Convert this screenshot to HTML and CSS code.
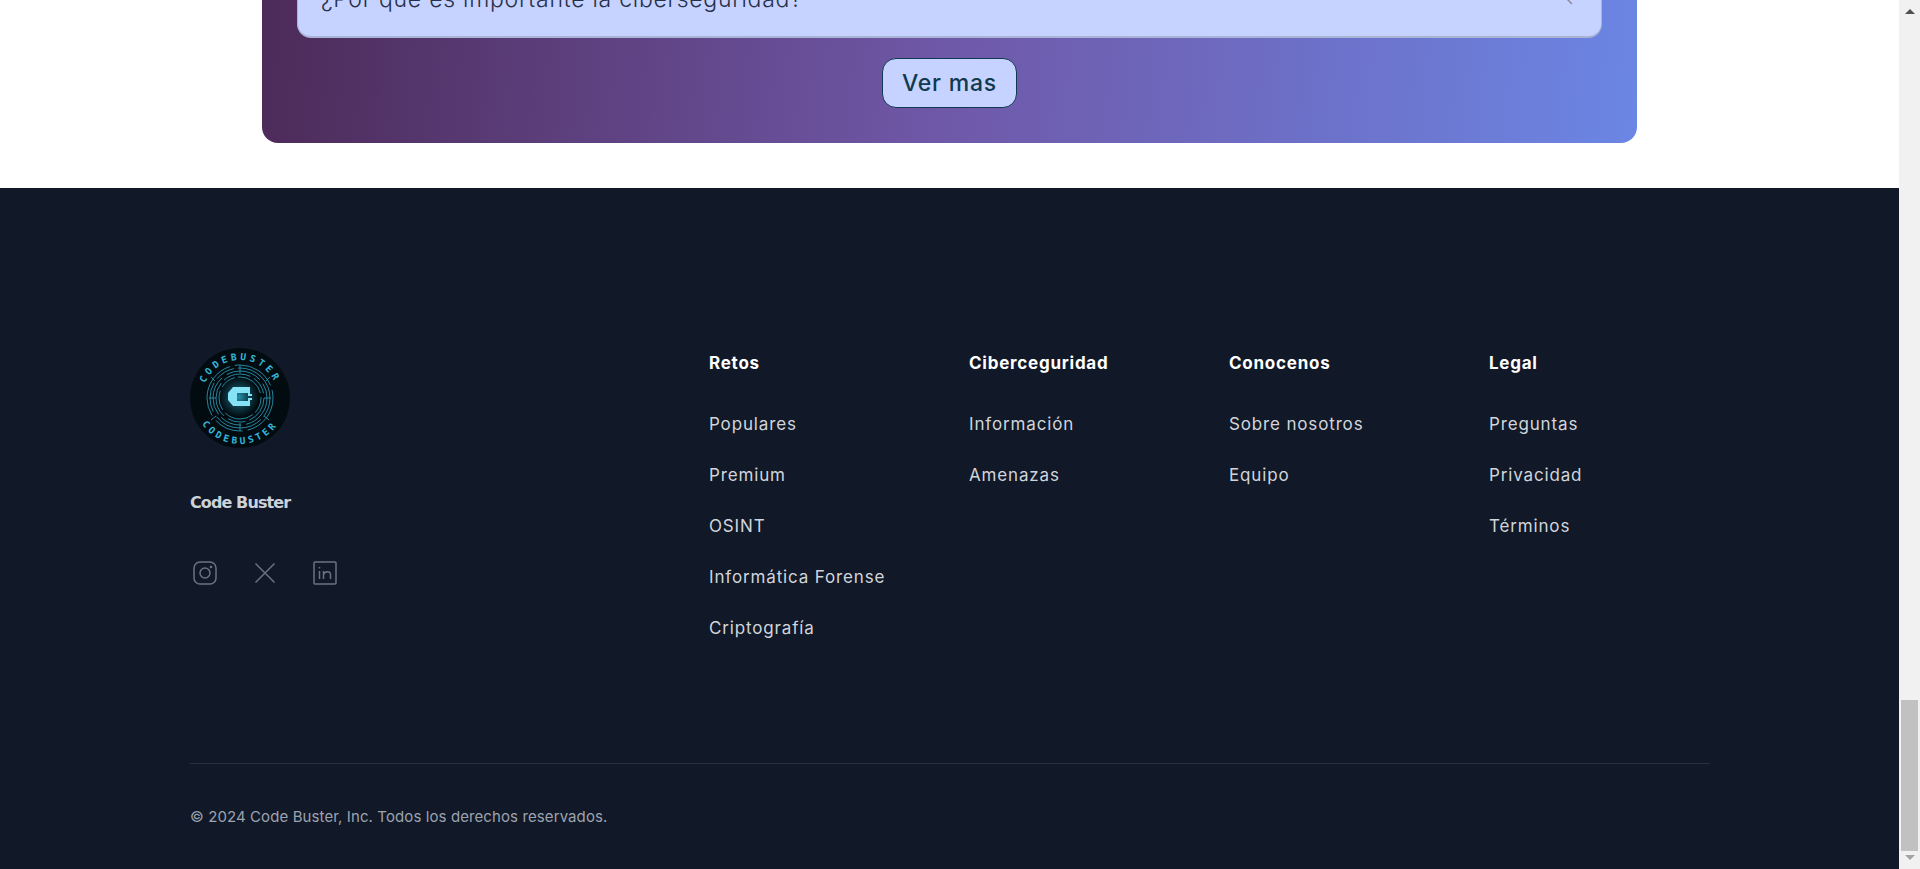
FILE: index.html
```html
<!DOCTYPE html>
<html lang="es">
<head>
<meta charset="utf-8">
<title>Code Buster</title>
<link rel="stylesheet" href="styles.css">
</head>
<body>
<div class="app">
  <main class="page">
    <section class="faq">
      <div class="faq-card">
        <div class="faq-item">
          <span class="faq-q">¿Por qué es importante la ciberseguridad?</span>
          <svg class="faq-chev" viewBox="0 0 30 30"><path d="M16 8 L28 20"/></svg>
        </div>
        <button class="more">Ver mas</button>
      </div>
    </section>
    <footer class="footer">
      <div class="footer-grid">
        <div class="brand">
          <svg class="logo" viewBox="0 0 100 100">
            <defs>
              <path id="arcTop" d="M12 50 A38 38 0 0 1 88 50"/>
              <path id="arcBot" d="M4 50 A46 46 0 0 0 96 50"/>
              <radialGradient id="glow"><stop offset="0" stop-color="#2fb4d4" stop-opacity=".8"/><stop offset=".6" stop-color="#1f7f98" stop-opacity=".35"/><stop offset="1" stop-color="#1f7f98" stop-opacity="0"/></radialGradient>
            </defs>
            <circle cx="50" cy="50" r="50" fill="#020b10"/>
            <circle cx="49" cy="49" r="20" fill="url(#glow)"/>
            <g class="logo-rings">
              <circle class="ring ring-a" cx="50" cy="50" r="33"/>
              <circle class="ring ring-b" cx="50" cy="50" r="30"/>
              <circle class="ring ring-c" cx="50" cy="50" r="27"/>
              <circle class="ring ring-d" cx="50" cy="50" r="24"/>
              <circle class="ring ring-e" cx="50" cy="50" r="21"/>
              <path class="ring" d="M25 33 L21 29 M76 33 L80 29 M26 68 L21 72 M74 68 L79 72 M19 50 H26 M74 50 H81 M50 17 V25 M50 75 V83"/>
            </g>
            <text class="logo-text"><textPath href="#arcTop" startOffset="50%" text-anchor="middle">CODEBUSTER</textPath></text>
            <text class="logo-text"><textPath href="#arcBot" startOffset="50%" text-anchor="middle">CODEBUSTER</textPath></text>
            <path class="logo-c" d="M38 45 L43 39 H60 V46 H62 V48 H58 V45 H47 V53 H58 V50 H62 V52 H60 V58 H43 L38 52 Z"/>
          </svg>
          <div class="brand-name">Code Buster</div>
          <div class="socials">
            <svg class="social" viewBox="0 0 30 30"><rect x="4" y="4" width="22" height="22" rx="6"/><circle cx="15" cy="15" r="5"/><circle cx="21" cy="9" r=".6"/></svg>
            <svg class="social" viewBox="0 0 30 30"><path d="M5.5 5.5 L24.5 24.5 M24.5 5.5 L5.5 24.5"/></svg>
            <svg class="social" viewBox="0 0 30 30"><rect x="4" y="4" width="22" height="22" rx="1"/><path d="M9.5 13 V21 M9.5 9 V10.4 M13.5 21 V13 M13.5 16.5 C14.5 13.5 20.5 12 20.5 17 V21"/></svg>
          </div>
        </div>
        <nav class="col">
          <h3 class="col-title">Retos</h3>
          <a class="col-link">Populares</a>
          <a class="col-link">Premium</a>
          <a class="col-link">OSINT</a>
          <a class="col-link">Informática Forense</a>
          <a class="col-link">Criptografía</a>
        </nav>
        <nav class="col">
          <h3 class="col-title">Ciberceguridad</h3>
          <a class="col-link">Información</a>
          <a class="col-link">Amenazas</a>
        </nav>
        <nav class="col">
          <h3 class="col-title">Conocenos</h3>
          <a class="col-link">Sobre nosotros</a>
          <a class="col-link">Equipo</a>
        </nav>
        <nav class="col">
          <h3 class="col-title">Legal</h3>
          <a class="col-link">Preguntas</a>
          <a class="col-link">Privacidad</a>
          <a class="col-link">Términos</a>
        </nav>
      </div>
      <div class="footer-bottom">© 2024 Code Buster, Inc. Todos los derechos reservados.</div>
    </footer>
  </main>
  <aside class="scrollbar">
    <span class="sb-arrow sb-up"></span>
    <span class="sb-track"><span class="sb-thumb"></span></span>
    <span class="sb-arrow sb-down"></span>
  </aside>
</div>
</body>
</html>
```
FILE: styles.css
```css
* { box-sizing: border-box; }
html, body { margin: 0; height: 100%; overflow: hidden; }
body { font-family: Inter, "Liberation Sans", sans-serif; background: #fff; }

.app { display: flex; height: 869px; }
.page { flex: 1; min-width: 0; display: flex; flex-direction: column; }

.faq { height: 188px; display: flex; justify-content: center; align-items: flex-end; overflow: hidden; padding-bottom: 45px; flex-shrink: 0; }
.faq-card { width: 1375px; height: 220px; flex-shrink: 0; padding: 0 35px 35px; border-radius: 0 0 16px 16px; display: flex; flex-direction: column; justify-content: flex-end; align-items: center; gap: 20px; background: linear-gradient(95deg, #4c2a58 0%, #6f58a8 50%, #6b86e4 100%); }
.faq-item { width: 100%; height: 76px; flex-shrink: 0; padding: 0 27px 0 23px; display: flex; justify-content: space-between; align-items: center; background: #c6d2ff; border: 1px solid #a9b3d6; border-top: 0; border-bottom-width: 2px; border-radius: 0 0 14px 14px; }
.faq-q { font-size: 23px; letter-spacing: .75px; font-weight: 300; color: #26304a; }
.faq-chev { width: 30px; height: 30px; fill: none; stroke: #8f8f9c; stroke-width: 1.5; }

.more { width: 135px; height: 50px; padding: 0; border: 1px solid #0f3a50; border-radius: 14px; background: #c6d2ff; color: #0f3a50; font: 500 23px Inter, "Liberation Sans", sans-serif; letter-spacing: .8px; }

.footer { flex: 1; background: #111827; padding: 160px 189px 0 190px; display: flex; flex-direction: column; }
.footer-grid { display: grid; grid-template-columns: 519px 260px 260px 260px 1fr; height: 415px; }
.brand { display: flex; flex-direction: column; align-items: flex-start; }
.logo { width: 100px; height: 100px; }
.ring { fill: none; stroke: #2a93ae; stroke-width: .9; }
.ring-a { stroke-dasharray: 44 5 30 6 60 5; }
.ring-b { stroke-dasharray: 20 4 50 6 30 5; }
.ring-c { stroke-dasharray: 36 5 22 4 40 6; }
.ring-d { stroke-dasharray: 28 4 18 5 36 4; }
.ring-e { stroke-dasharray: 16 3 30 4 20 4; }
.logo-text { font: 700 9.5px "DejaVu Sans Mono", monospace; letter-spacing: 3.2px; fill: #35b5d8; }
.logo-c { fill: #86e2f5; }
.brand-name { margin-top: 44px; font: 700 16px/22px "DejaVu Sans", sans-serif; letter-spacing: -.9px; color: #cdd2da; }
.socials { display: flex; gap: 30px; margin-top: 44px; }
.social { width: 30px; height: 30px; fill: none; stroke: #6b7280; stroke-width: 1.5; }

.col { display: flex; flex-direction: column; align-items: flex-start; }
.col-title { margin: 4px 0 38px; font-size: 17px; line-height: 22px; letter-spacing: .75px; font-weight: 700; color: #fff; }
.col-link { font-size: 17px; line-height: 24px; letter-spacing: .85px; margin-bottom: 27px; color: #d1d5db; }

.footer-bottom { border-top: 1px solid #283142; padding-top: 43px; font-size: 15px; line-height: 20px; letter-spacing: .1px; color: #9ca3af; }

.scrollbar { width: 21px; flex-shrink: 0; background: #f1f1f1; display: flex; flex-direction: column; align-items: center; padding: 9px 0; }
.sb-arrow { width: 0; height: 0; border-left: 5px solid transparent; border-right: 5px solid transparent; }
.sb-up { border-bottom: 5px solid #505050; }
.sb-down { border-top: 5px solid #a3a3a3; }
.sb-track { flex: 1; width: 100%; display: flex; flex-direction: column; justify-content: flex-end; padding: 0 2px 4px; }
.sb-thumb { display: block; height: 151px; background: #c1c1c1; }
```
